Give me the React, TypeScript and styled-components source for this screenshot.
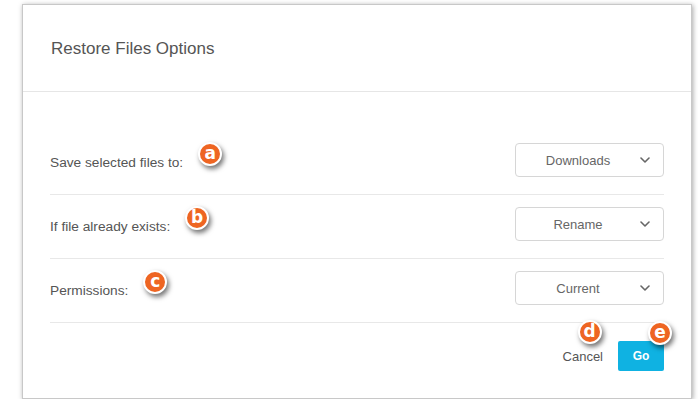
import React from "react";
import styled, { createGlobalStyle } from "styled-components";

const GlobalStyle = createGlobalStyle`
  html, body {
    margin: 0;
    padding: 0;
    background: #ffffff;
    font-family: "Liberation Sans", Arial, sans-serif;
  }
`;

interface OptionRow {
  label: string;
  value: string;
  badge: string;
}

const rows: OptionRow[] = [
  { label: "Save selected files to:", value: "Downloads", badge: "a" },
  { label: "If file already exists:", value: "Rename", badge: "b" },
  { label: "Permissions:", value: "Current", badge: "c" },
];

const Chevron: React.FC = () => (
  <svg width="10" height="6" viewBox="0 0 10 6" fill="none">
    <path
      d="M1 1l4 4 4-4"
      stroke="#666"
      strokeWidth="1.6"
      strokeLinecap="round"
      strokeLinejoin="round"
    />
  </svg>
);

const App: React.FC = () => {
  return (
    <>
      <GlobalStyle />
      <Page>
        <Dialog>
          <Header>
            <Title>Restore Files Options</Title>
          </Header>

          <Body>
            {rows.map((row) => (
              <Row key={row.label}>
                <Label>
                  {row.label}
                  <Badge left="calc(100% + 15px)" top="-9px">
                    {row.badge}
                  </Badge>
                </Label>
                <Select>
                  <span className="value">{row.value}</span>
                  <Chevron />
                </Select>
              </Row>
            ))}
          </Body>

          <Footer>
            <CancelButton>
              Cancel
              <Badge left="15px" top="-29px">
                d
              </Badge>
            </CancelButton>
            <GoButton>
              Go
              <Badge left="30px" top="-20px">
                e
              </Badge>
            </GoButton>
          </Footer>
        </Dialog>
      </Page>
    </>
  );
};

export default App;

const Page = styled.div`
  padding: 4px 0 0 22px;
`;

const Dialog = styled.div`
  width: 670px;
  height: 395px;
  box-sizing: border-box;
  background: #fff;
  border: 1px solid #c8c8c8;
  box-shadow: 1px 1px 5px rgba(0, 0, 0, 0.35);
  display: flex;
  flex-direction: column;
`;

const Header = styled.div`
  height: 86px;
  padding: 0 28px;
  display: flex;
  align-items: center;
  border-bottom: 1px solid #e6e6e6;
`;

const Title = styled.h2`
  margin: 0;
  padding-top: 2px;
  font-size: 17px;
  font-weight: normal;
  color: #555;
`;

const Body = styled.div`
  padding: 39px 27px 0;
`;

const Row = styled.div`
  display: flex;
  align-items: center;
  justify-content: space-between;
  padding: 12px 0 17px;
  border-bottom: 1px solid #e8e8e8;
`;

const Label = styled.span`
  position: relative;
  font-size: 13.7px;
  color: #555;
  padding-top: 4px;
`;

const Select = styled.div`
  width: 149px;
  height: 34px;
  box-sizing: border-box;
  border: 1px solid #d6d6d6;
  border-radius: 4px;
  display: flex;
  align-items: center;
  padding-right: 13px;
  font-size: 13px;
  color: #666;

  .value {
    flex: 1;
    text-align: center;
  }
`;

const Footer = styled.div`
  display: flex;
  justify-content: flex-end;
  align-items: center;
  gap: 15px;
  padding: 18px 27px 0;
`;

const CancelButton = styled.button`
  position: relative;
  border: none;
  background: none;
  padding: 0;
  font-family: inherit;
  font-size: 13px;
  color: #555;
  cursor: pointer;
`;

const GoButton = styled.button`
  position: relative;
  width: 46px;
  height: 30px;
  border: none;
  border-radius: 2px;
  background: #0fb2e2;
  color: #fff;
  font-family: inherit;
  font-size: 12px;
  font-weight: bold;
  cursor: pointer;
`;

const Badge = styled.span<{ left: string; top: string }>`
  position: absolute;
  left: ${(p) => p.left};
  top: ${(p) => p.top};
  width: 24px;
  height: 24px;
  box-sizing: border-box;
  border-radius: 50%;
  border: 2px solid #fff;
  background: #ee6522;
  box-shadow: 2px 3px 5px rgba(0, 0, 0, 0.55);
  color: #fff;
  font-family: "DejaVu Sans", sans-serif;
  font-weight: bold;
  font-size: 17px;
  line-height: 19px;
  text-align: center;
`;
